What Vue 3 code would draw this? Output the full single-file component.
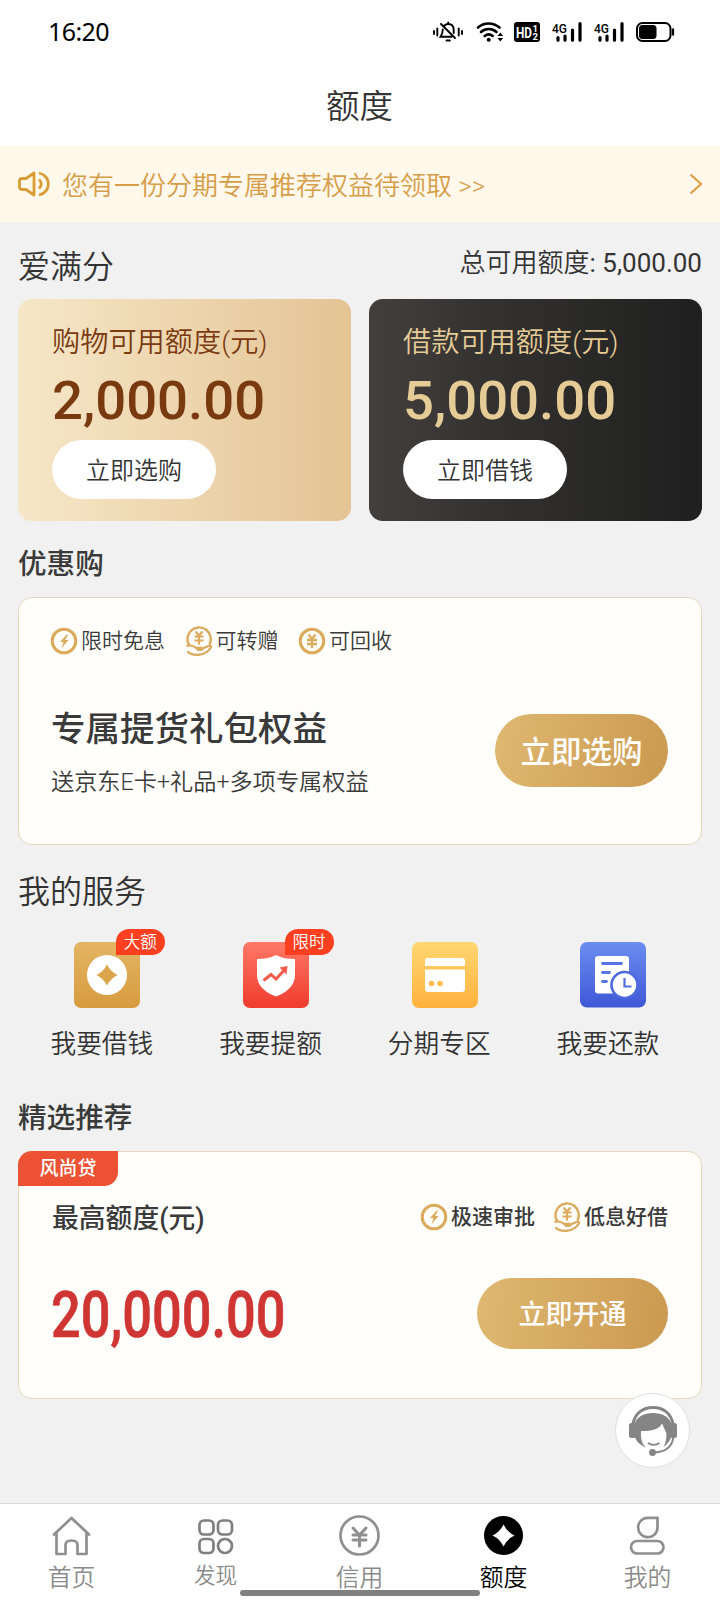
<script setup>
const perks = [
  { icon: 'bolt', label: '限时免息' },
  { icon: 'hand', label: '可转赠' },
  { icon: 'yuan', label: '可回收' },
]
const offerPerks = [
  { icon: 'bolt', label: '极速审批' },
  { icon: 'hand', label: '低息好借' },
]
const quotas = [
  { kind: 'gold', label: '购物可用额度(元)', amount: '2,000.00', action: '立即选购' },
  { kind: 'dark', label: '借款可用额度(元)', amount: '5,000.00', action: '立即借钱' },
]
const services = [
  { icon: 'coin', label: '我要借钱', badge: '大额' },
  { icon: 'shield', label: '我要提额', badge: '限时' },
  { icon: 'card', label: '分期专区' },
  { icon: 'bill', label: '我要还款' },
]
const tabs = [
  { icon: 'home', label: '首页' },
  { icon: 'grid', label: '发现' },
  { icon: 'credit', label: '信用' },
  { icon: 'quota', label: '额度' },
  { icon: 'me', label: '我的' },
]
</script>

<template>
  <div class="screen">
    <svg class="defs" width="0" height="0">
      <defs>
        <linearGradient id="gCoin" x1="0" y1="0" x2="0" y2="1"><stop offset="0" stop-color="#e3b564" /><stop offset="1" stop-color="#d79b3f" /></linearGradient>
        <linearGradient id="gRed" x1="0" y1="0" x2="0" y2="1"><stop offset="0" stop-color="#ff7866" /><stop offset="1" stop-color="#f03c2e" /></linearGradient>
        <linearGradient id="gYel" x1="0" y1="0" x2="0" y2="1"><stop offset="0" stop-color="#ffd772" /><stop offset="1" stop-color="#ffb13c" /></linearGradient>
        <linearGradient id="gBlue" x1="0" y1="0" x2="0" y2="1"><stop offset="0" stop-color="#6b8ef0" /><stop offset="1" stop-color="#3f57d6" /></linearGradient>
        <symbol id="bolt" viewBox="0 0 28 32">
          <circle cx="14" cy="16" r="11.8" fill="none" stroke="#dbaa5c" stroke-width="3" />
          <path d="M16.800 9.500 10 17h3.500l-2 6.200 7-8.200h-3.400l3-5.500z" fill="#dbaa5c" />
        </symbol>
        <symbol id="yuan" viewBox="0 0 28 32">
          <circle cx="14" cy="16" r="11.8" fill="none" stroke="#dbaa5c" stroke-width="3" />
          <path d="M10.500 9.500l3.500 4.500 3.500-4.500M9 15h10M9 19h10M14 14v9" fill="none" stroke="#dbaa5c" stroke-width="2.300" />
        </symbol>
        <symbol id="hand" viewBox="0 0 28 32">
          <path d="M4.300 20.500A11.700 11.700 0 1 1 24.500 19.500" fill="none" stroke="#dbaa5c" stroke-width="2.400" />
          <path d="M10.500 6.500l3.500 4 3.500-4M9.500 11.500h9M9.500 15.500h9M14 10.500v9" fill="none" stroke="#dbaa5c" stroke-width="2.200" />
          <path d="M2.500 20.800c4-1 6 0 8.500 2h5.500c1.500 0 1.500 2 0 2h-4M17.500 23.500l6-2.500c2-.8 3.300.3 2 2C21 30.500 9 32 3 27" fill="none" stroke="#dbaa5c" stroke-width="2.200" stroke-linecap="round" />
        </symbol>
      </defs>
    </svg>

    <header class="status">
      <span class="clock">16:20</span>
      <svg class="status-icons" width="246" height="24" viewBox="430 20 246 24">
        <g fill="none" stroke="#000" stroke-width="1.900" stroke-linecap="round">
          <path d="M434 31v3M437.300 28.500v7M458.700 28.500v7M462 31v3M441 24l14 14M444.500 25.500c1-1 2.200-1.500 3.700-1.500 3.600 0 5.500 2.600 5.500 6v3M448.200 22.500v1M442.800 29.500c-.1 4-1 5-2.300 7.200h11" />
          <path d="M446.500 40.500h3.400" />
        </g>
        <g fill="none" stroke="#000" stroke-width="2.600" stroke-linecap="round">
          <path d="M478 27.500c6-5.400 15-5.400 21.500 0M481 32c4.500-4 11-4 15.500 0M484.700 36c2.300-1.900 5.500-1.900 8 0" />
        </g>
        <circle cx="488.700" cy="39.800" r="2" />
        <path d="M497.500 36l2.800-3.500 2.800 3.500zM497.500 38l2.800 3.500 2.800-3.500z" />
        <rect x="514" y="22" width="26" height="20" rx="3" />
        <text x="516" y="37.500" class="hd" textLength="16" lengthAdjust="spacingAndGlyphs">HD</text>
        <text x="532.500" y="31.500" class="hd-n">1</text>
        <text x="532.500" y="39.800" class="hd-n">2</text>
        <g v-for="x in [0, 42]" :key="x" :transform="`translate(${x} 0)`">
          <text x="552" y="33" class="net" textLength="15" lengthAdjust="spacingAndGlyphs">4G</text>
          <path d="M558 37.500v2.700M565 36v4.200M572.500 30v10.200M580 23.500v16.700" stroke="#000" stroke-width="3.200" stroke-linecap="round" />
        </g>
        <rect x="637" y="23" width="33.500" height="18" rx="5.500" fill="none" stroke="#000" stroke-width="2" />
        <rect x="639" y="25" width="17.500" height="14" rx="3.500" />
        <path d="M673 28.500v7" stroke="#000" stroke-width="2.200" />
      </svg>
    </header>

    <h1 class="title">额度</h1>

    <div class="notice">
      <svg width="34" height="26" viewBox="0 0 34 26" fill="none" stroke="#d99c34" stroke-width="2.800">
        <path d="M17 2v22l-8-5.500H5c-1.800 0-2.500-.8-2.500-2.500v-6c0-1.700.7-2.500 2.500-2.500h4z" stroke-linejoin="round" />
        <path d="M22 8.500c3 2.500 3 6.500 0 9M22 2c12.500 2.500 12.500 19.500 0 22" />
      </svg>
      <p class="notice-text">您有一份分期专属推荐权益待领取 &gt;&gt;</p>
      <svg width="14" height="22" viewBox="0 0 14 22" fill="none" stroke="#dda145" stroke-width="2.200"><path d="M1.500 1.500 12 11 1.500 20.500" /></svg>
    </div>

    <main class="content">
      <div class="head head-quota">
        <h2 class="h-light">爱满分</h2>
        <span class="total">总可用额度<b>: 5,000.00</b></span>
      </div>

      <section class="quotas">
        <article v-for="q in quotas" :key="q.kind" class="quota" :class="q.kind">
          <div class="quota-label">{{ q.label }}</div>
          <div class="quota-amount">{{ q.amount }}</div>
          <button class="quota-btn">{{ q.action }}</button>
        </article>
      </section>

      <div class="head head-promo"><h2 class="h-mid">优惠购</h2></div>
      <section class="panel promo">
        <ul class="perks">
          <li v-for="p in perks" :key="p.label">
            <svg width="28" height="32"><use :href="'#' + p.icon" /></svg>
            <span>{{ p.label }}</span>
          </li>
        </ul>
        <div class="promo-row">
          <div>
            <h3 class="promo-title">专属提货礼包权益</h3>
            <p class="promo-sub">送京东E卡+礼品+多项专属权益</p>
          </div>
          <button class="cta cta-buy">立即选购</button>
        </div>
      </section>

      <div class="head head-serv"><h2 class="h-light">我的服务</h2></div>
      <section class="services">
        <div v-for="s in services" :key="s.icon" class="service">
          <div class="service-icon">
            <svg v-if="s.icon === 'coin'" width="66" height="66" viewBox="0 0 66 66">
              <rect width="66" height="66" rx="7" fill="url(#gCoin)" />
              <circle cx="33" cy="33" r="20" fill="#fff" />
              <path d="M33 22.500Q36.500 29.500 43.500 33 36.500 36.500 33 43.500 29.500 36.500 22.500 33 29.500 29.500 33 22.500z" fill="#dba54c" />
            </svg>
            <svg v-else-if="s.icon === 'shield'" width="66" height="66" viewBox="0 0 66 66">
              <rect width="66" height="66" rx="7" fill="url(#gRed)" />
              <path d="M33 13C39 16 45 17 52 17V33C52 43 45 50 33 54.500 21 50 14 43 14 33V17C21 17 27 16 33 13z" fill="#fff" />
              <path d="M20.500 38.500l7.500-6 5 4.500 7.500-8" fill="none" stroke="#f45a4a" stroke-width="3" />
              <path d="M36.500 25.500l8-1.500-1 8.500z" fill="#f45a4a" />
            </svg>
            <svg v-else-if="s.icon === 'card'" width="66" height="66" viewBox="0 0 66 66">
              <rect width="66" height="66" rx="7" fill="url(#gYel)" />
              <path d="M13 24v-5q0-3 3-3h34q3 0 3 3v5zM13 27.500h40V47q0 3-3 3H16q-3 0-3-3z" fill="#fff" />
              <circle cx="19.500" cy="41.500" r="2.800" fill="#ffbd50" /><circle cx="28" cy="41.500" r="2.800" fill="#ffbd50" />
            </svg>
            <svg v-else width="66" height="66" viewBox="0 0 66 66">
              <rect width="66" height="65.500" rx="7" fill="url(#gBlue)" />
              <rect x="15" y="14" width="34" height="37.500" rx="3" fill="#fff" />
              <path d="M22.500 21.500h19M22.500 30.500h7M22.500 39.500h4" stroke="#5674e4" stroke-width="2.800" stroke-linecap="round" />
              <circle cx="44.500" cy="43" r="13" fill="#fff" stroke="#4e69df" stroke-width="2.600" />
              <path d="M44.500 36v8.500h7" fill="none" stroke="#5370e1" stroke-width="2.200" />
            </svg>
            <span v-if="s.badge" class="badge">{{ s.badge }}</span>
          </div>
          <div class="service-label">{{ s.label }}</div>
        </div>
      </section>

      <div class="head head-pick"><h2 class="h-mid">精选推荐</h2></div>
      <section class="panel offer">
        <span class="ribbon">风尚贷</span>
        <div class="offer-top">
          <span class="offer-label">最高额度(元)</span>
          <ul class="perks strong">
            <li v-for="p in offerPerks" :key="p.label">
              <svg width="28" height="32"><use :href="'#' + p.icon" /></svg>
              <span>{{ p.label }}</span>
            </li>
          </ul>
        </div>
        <div class="offer-bottom">
          <span class="offer-amount">20,000.00</span>
          <button class="cta cta-open">立即开通</button>
        </div>
      </section>
    </main>

    <div class="support">
      <svg width="50" height="52" viewBox="0 0 50 52">
        <path d="M5 19C7 8 15 2.500 25 2.500s18 5.500 20 16.500" fill="none" stroke="#858585" stroke-width="3" />
        <path d="M6.500 19C9 11.500 16 8 25 8S41 11.500 43.500 19v12c-1.500 5-4 8-8 11 2.500-5 3.300-9 2.800-14L34 18.500C31 24.500 24 26 13 26c-.5 8 1 13 5 16.500C11.500 40 8 36 6.500 31z" fill="#858585" />
        <path d="M20 38c3.200 2.600 8 2.600 11.500 0" fill="none" stroke="#858585" stroke-width="1.800" />
        <rect x="1" y="18" width="7" height="15" rx="2.500" fill="#858585" /><rect x="42" y="18" width="7" height="15" rx="2.500" fill="#858585" />
        <path d="M45.500 31c-1 11-8 16.500-21 16.500" fill="none" stroke="#858585" stroke-width="2" />
        <circle cx="24.500" cy="47.500" r="3.400" fill="#858585" />
      </svg>
    </div>

    <nav class="tabs">
      <div v-for="t in tabs" :key="t.icon" class="tab" :class="[t.icon, { active: t.icon === 'quota' }]">
        <svg width="44" height="44" viewBox="0 0 44 44" fill="none" stroke="#8f8f8f" stroke-width="2.700" stroke-linejoin="round" stroke-linecap="round">
          <path v-if="t.icon === 'home'" d="M4 20.500 21.500 4 39 20.500M6.500 19v21h9V31.500c0-4 2-5 6-5s6 1 6 5V40h9V19" />
          <g v-else-if="t.icon === 'grid'">
            <rect x="5.500" y="6.500" width="14" height="14" rx="4.500" /><rect x="24" y="6.500" width="14" height="14" rx="4.500" />
            <rect x="5.500" y="25" width="14" height="14" rx="4.500" /><circle cx="31" cy="32" r="7" />
          </g>
          <g v-else-if="t.icon === 'credit'">
            <circle cx="21.500" cy="21.500" r="19" />
            <path d="M15 14 21.500 21l6.500-7M15 21h13M15 26h13M21.500 21V32" stroke-width="3" />
          </g>
          <g v-else-if="t.icon === 'quota'" stroke="none">
            <circle cx="21.500" cy="21.500" r="19.500" fill="#000" />
            <path d="M21.500 10.500Q25 18 32.500 21.500 25 25 21.500 32.500 18 25 10.500 21.500 18 18 21.500 10.500z" fill="#fff" />
          </g>
          <g v-else>
            <path d="M31.500 3.800V14A9.700 9.700 0 1 1 21.800 3.800z" />
            <rect x="5" y="27" width="32.500" height="12.500" rx="6.200" />
          </g>
        </svg>
        <span>{{ t.label }}</span>
      </div>
    </nav>
    <div class="indicator"></div>
  </div>
</template>

<style>
body { margin: 0; background: #f1f1f1; }
</style>

<style scoped>
.screen {
  position: relative;
  display: flex;
  flex-direction: column;
  width: 720px;
  height: 1600px;
  overflow: hidden;
  background: #f1f1f1;
  color: #333;
  font-family: Roboto, "Noto Sans CJK SC", sans-serif;
  font-weight: 350;
}
.screen * { box-sizing: border-box; }
.defs { position: absolute; }
h1, h2, h3, p, ul { margin: 0; padding: 0; font-weight: inherit; }
ul { list-style: none; }
button { border: 0; padding: 0; font-family: inherit; font-weight: inherit; white-space: nowrap; }
svg { display: block; flex: none; }

.status {
  flex: none;
  display: flex;
  align-items: center;
  justify-content: space-between;
  height: 64px;
  padding: 0 44px 0 48px;
  background: #fff;
}
.clock { margin-top: -2px; font: 400 25px "Noto Sans", sans-serif; letter-spacing: -0.6px; color: #000; }
.hd { font: 700 14px Roboto, sans-serif; fill: #fff; }
.hd-n { font: 700 9.500px Roboto, sans-serif; fill: #fff; }
.net { font: 500 13px Roboto, sans-serif; }
.title {
  flex: none;
  height: 82px;
  line-height: 86px;
  padding-right: 1px;
  background: #fff;
  text-align: center;
  font-size: 33.500px;
}
.notice {
  flex: none;
  display: flex;
  align-items: center;
  height: 76px;
  padding: 0 17px;
  background: #fff8eb;
}
.notice-text { flex: 1; margin-left: 11px; padding-top: 3px; font-size: 26px; line-height: 36px; color: #d69d48; }

.content { flex: 1; min-height: 0; padding: 0 18px; }
.head { display: flex; align-items: center; justify-content: space-between; }
.head-quota { height: 77px; padding-top: 12px; }
.head-promo { height: 76px; padding-top: 9px; }
.head-serv { height: 84px; padding-top: 9px; }
.head-pick { height: 89px; padding-top: 23px; }
.h-light { font-size: 32px; line-height: 40px; }
.h-mid { font-size: 28.600px; line-height: 40px; font-weight: 500; color: #3a3a3a; }
.total { margin-top: -8px; font-size: 26px; line-height: 36px; }
.total b { font-weight: 400; }

.quotas { display: grid; grid-template-columns: 1fr 1fr; gap: 18px; }
.quota { height: 222px; padding: 25px 34px 0; border-radius: 14px; }
.gold { background: linear-gradient(90deg, #f6e7c8, #e4c394); color: #7a3a10; }
.dark { background: linear-gradient(90deg, #433f3d, #302f2e 45%, #1f1f1f); color: #e5cb95; }
.quota-label { font-size: 28.200px; line-height: 38px; white-space: nowrap; }
.quota-amount { height: 78px; line-height: 76px; font-size: 54.500px; font-weight: 500; }
.quota-btn { width: 164px; height: 59px; padding-bottom: 3px; border-radius: 30px; background: #fff; color: #333; font-size: 24px; }

.panel { position: relative; height: 248px; border: 1.500px solid #e6d9bd; border-radius: 14px; background: #fffefa; }
.perks { display: flex; gap: 18px; }
.perks li { display: flex; align-items: center; gap: 3px; font-size: 21px; line-height: 32px; white-space: nowrap; color: #3a3a3a; }
.promo .perks { gap: 19.500px; }
.strong li { font-weight: 500; }
.promo { padding: 27px 33px 0 31px; }
.promo-row { display: flex; justify-content: space-between; padding-top: 50px; }
.promo-title { padding-left: 1px; font-size: 34.500px; line-height: 44px; font-weight: 500; color: #3a3a3a; }
.promo-sub { margin-top: 14px; padding-left: 1px; font-size: 23.200px; line-height: 34px; color: #3a3a3a; }
.cta { padding-bottom: 2px; background: linear-gradient(100deg, #dfb871, #cb9950); color: #fff; font-weight: 500; border-radius: 37px; }
.cta-buy { width: 173px; height: 73px; margin-top: 7px; font-size: 30.500px; }
.cta-open { width: 191px; height: 71px; font-size: 27px; }

.services { display: grid; grid-template-columns: repeat(4, 168.700px); height: 133px; }
.service { display: flex; flex-direction: column; align-items: center; padding-top: 13px; }
.service-icon { position: relative; left: 5px; }
.badge {
  position: absolute;
  left: 41.500px;
  top: -13px;
  width: 49px;
  height: 26px;
  border-radius: 13px 13px 13px 0;
  background: #ff4020;
  color: #fff;
  text-align: center;
  font-size: 16.600px;
  line-height: 27px;
}
.service-label { margin: 18px 1px 0 0; font-size: 25.700px; line-height: 37px; }

.ribbon {
  position: absolute;
  left: -1px;
  top: -1px;
  width: 100px;
  height: 35px;
  border-radius: 14px 0 14px 0;
  background: #eb5132;
  color: #fff;
  text-align: center;
  font-size: 19px;
  line-height: 36px;
  font-weight: 500;
}
.offer { padding: 47px 33px 0 33px; }
.offer-top { display: flex; align-items: center; justify-content: space-between; height: 38px; }
.offer-top .perks { margin-top: -3px; }
.offer-label { margin-top: -4px; font-size: 26.800px; font-weight: 500; color: #3a3a3a; }
.offer-bottom { display: flex; align-items: center; justify-content: space-between; margin-top: 41px; height: 71px; }
.offer-amount {
  margin: 4px 0 0 -1px;
  font-size: 64.500px;
  line-height: 71px;
  font-weight: 500;
  color: #cf3533;
  -webkit-text-stroke: 0.7px #cf3533;
  transform: scaleX(0.812);
  transform-origin: 0 50%;
}

.support {
  position: absolute;
  left: 615px;
  top: 1393px;
  width: 75px;
  height: 75px;
  display: flex;
  align-items: center;
  justify-content: center;
  border-radius: 50%;
  border: 1px solid #e0e0e0;
  background: #fff;
}
.tabs { flex: none; display: grid; grid-template-columns: repeat(5, 1fr); height: 97px; border-top: 1px solid #d9d9d9; background: #fff; }
.tab { display: flex; flex-direction: column; align-items: center; padding-top: 10px; font-size: 23.800px; line-height: 30px; color: #8a8a8a; }
.tab span { margin: 5px 1px 0 0; }
.grid svg { stroke: #7f7f7f; }
.tab.grid span { margin-top: 3px; font-size: 21.500px; }
.tab.active { color: #000; }
.indicator { position: absolute; left: 240px; top: 1590px; width: 240px; height: 6px; border-radius: 3px; background: #808080; }
</style>
